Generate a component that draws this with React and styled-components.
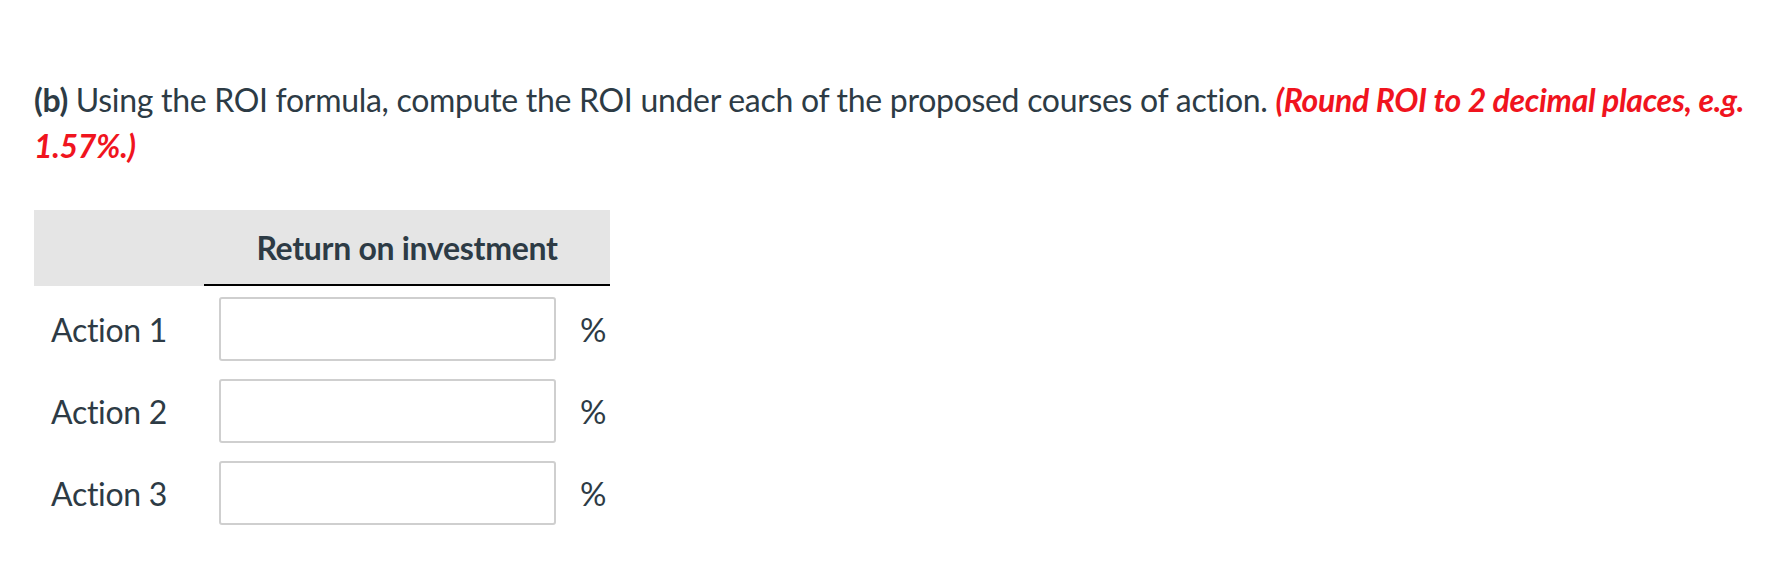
import styled, { createGlobalStyle } from "styled-components";

const GlobalStyle = createGlobalStyle`
  body {
    margin: 0;
    background: #fff;
    font-family: Lato, "Open Sans", sans-serif;
    color: #2d3b45;
  }
`;

const Page = styled.div`
  padding: 77px 0 0 34px;
  width: 1730px;
`;

const Question = styled.p`
  margin: 0;
  font-size: 32px;
  line-height: 46px;
  letter-spacing: -0.3px;
`;

const Hint = styled.span`
  color: #f0141e;
  font-weight: 700;
  font-style: italic;
`;

const Table = styled.div`
  margin-top: 41px;
  width: 576px;
`;

const HeadRow = styled.div`
  display: flex;
  height: 76px;
  background: #e5e5e5;
`;

const HeadBlank = styled.div`
  width: 170px;
`;

const HeadCell = styled.div`
  flex: 1;
  display: flex;
  align-items: center;
  justify-content: center;
  font-size: 32px;
  font-weight: 700;
  border-bottom: 2px solid #000;
  letter-spacing: -0.3px;
`;

const Row = styled.div`
  display: flex;
  align-items: center;
  padding: 9px 0;
  &:first-of-type {
    padding-top: 11px;
  }
`;

const Label = styled.div`
  width: 153px;
  padding-left: 17px;
  font-size: 32px;
  letter-spacing: -0.3px;
`;

const Input = styled.input`
  box-sizing: border-box;
  width: 337px;
  height: 64px;
  margin-left: 15px;
  border: 2px solid #cfcfcf;
  border-radius: 3px;
  background: #fff;
  outline: none;
`;

const Unit = styled.span`
  margin-left: 24px;
  font-size: 33px;
`;

const rows = ["Action 1", "Action 2", "Action 3"];

export default function App() {
  return (
    <>
      <GlobalStyle />
      <Page>
        <Question>
          <b>(b)</b> Using the ROI formula, compute the ROI under each of the
          proposed courses of action.{" "}
          <Hint>(Round ROI to 2 decimal places, e.g. 1.57%.)</Hint>
        </Question>
        <Table>
          <HeadRow>
            <HeadBlank />
            <HeadCell>Return on investment</HeadCell>
          </HeadRow>
          <div>
            {rows.map((r) => (
              <Row key={r}>
                <Label>{r}</Label>
                <Input type="text" />
                <Unit>%</Unit>
              </Row>
            ))}
          </div>
        </Table>
      </Page>
    </>
  );
}
